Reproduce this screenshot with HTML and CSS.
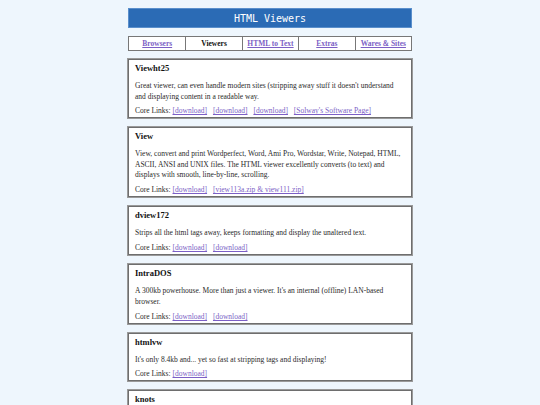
FILE: index.html
```html
<!DOCTYPE html>
<html>
<head>
<meta charset="utf-8">
<title>HTML Viewers</title>
<link rel="stylesheet" href="styles.css">
</head>
<body>
<div class="page">
  <div class="header">HTML Viewers</div>
  <div class="nav">
    <a class="nav-item" href="#">Browsers</a>
    <span class="nav-item current">Viewers</span>
    <a class="nav-item" href="#">HTML to Text</a>
    <a class="nav-item" href="#">Extras</a>
    <a class="nav-item" href="#">Wares &amp; Sites</a>
  </div>

  <div class="card">
    <h3 class="title">Viewht25</h3>
    <p class="desc">Great viewer, can even handle modern sites (stripping away stuff it doesn't understand and displaying content in a readable way.</p>
    <p class="links">Core Links: <a href="#">[download]</a> <a href="#">[download]</a> <a href="#">[download]</a> <a href="#">[Solway's Software Page]</a></p>
  </div>

  <div class="card">
    <h3 class="title">View</h3>
    <p class="desc">View, convert and print Wordperfect, Word, Ami Pro, Wordstar, Write, Notepad, HTML, ASCII, ANSI and UNIX files. The HTML viewer excellently converts (to text) and displays with smooth, line-by-line, scrolling.</p>
    <p class="links">Core Links: <a href="#">[download]</a> <a href="#">[view113a.zip &amp; view111.zip]</a></p>
  </div>

  <div class="card">
    <h3 class="title">dview172</h3>
    <p class="desc">Strips all the html tags away, keeps formatting and display the unaltered text.</p>
    <p class="links">Core Links: <a href="#">[download]</a> <a href="#">[download]</a></p>
  </div>

  <div class="card">
    <h3 class="title">IntraDOS</h3>
    <p class="desc">A 300kb powerhouse. More than just a viewer. It's an internal (offline) LAN-based browser.</p>
    <p class="links">Core Links: <a href="#">[download]</a> <a href="#">[download]</a></p>
  </div>

  <div class="card">
    <h3 class="title">htmlvw</h3>
    <p class="desc">It's only 8.4kb and... yet so fast at stripping tags and displaying!</p>
    <p class="links">Core Links: <a href="#">[download]</a></p>
  </div>

  <div class="card">
    <h3 class="title">knots</h3>
    <p class="desc">A tiny viewer.</p>
    <p class="links">Core Links: <a href="#">[download]</a></p>
  </div>
</div>
</body>
</html>
```
FILE: styles.css
```css
html, body {
  margin: 0;
  padding: 0;
  background: #eef6fd;
}
body {
  padding-top: 8px;
  font-family: "Liberation Serif", "Times New Roman", serif;
  color: #2a2a2a;
}
.page {
  width: 284px;
  margin: 0 auto;
}
.header {
  background: #2b6bb5;
  color: #fff;
  font-family: "DejaVu Sans Mono", monospace;
  font-size: 10px;
  height: 20px;
  line-height: 20px;
  text-align: center;
  border: 1px solid #5a8fcc;
  box-sizing: border-box;
}
.nav {
  display: grid;
  grid-template-columns: repeat(5, 1fr);
  margin-top: 8px;
  border: 1px solid #777;
  background: #fff;
  height: 15px;
  box-sizing: border-box;
}
.nav-item {
  border-left: 1px solid #777;
  font-size: 7.5px;
  font-weight: bold;
  text-align: center;
  line-height: 13px;
  color: #7c5fc6;
}
.nav-item:first-child {
  border-left: none;
}
.nav-item.current {
  color: #111;
}
.card {
  background: #fff;
  border: 1px solid #6e6e6e;
  box-shadow: 0 0 0 1px #9a9a9a;
  margin-top: 9px;
  padding: 3px 6px 1px;
}
.nav + .card {
  margin-top: 8px;
}
.title {
  font-size: 8.5px;
  font-weight: bold;
  line-height: 11px;
  margin: 0 0 7px;
  color: #111;
}
.desc {
  font-size: 7.5px;
  line-height: 10.5px;
  margin: 0 0 3.4px;
}
.links {
  font-size: 7.5px;
  line-height: 11px;
  margin: 0;
}
.links a {
  color: #7c5fc6;
  margin-right: 4px;
}
```
